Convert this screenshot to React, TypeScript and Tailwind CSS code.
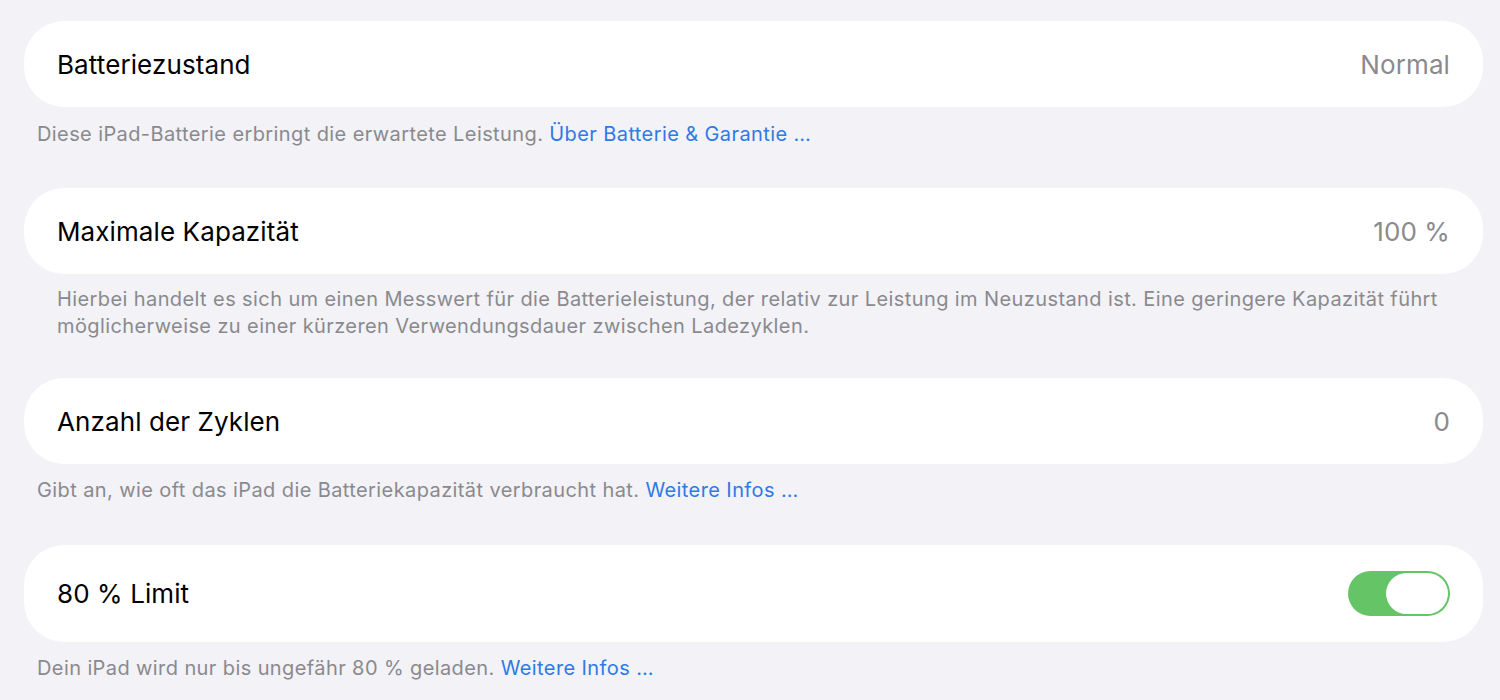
import React from "react";

const font = { fontFamily: 'Inter, "Noto Sans", sans-serif' };

function Row({ label, value, tall, children }: { label: string; value?: string; tall?: boolean; children?: React.ReactNode }) {
  return (
    <div className={`flex items-center justify-between bg-white rounded-[40px] pl-[33px] pr-[33px] ${tall ? "h-[97px]" : "h-[86px]"}`}>
      <span className="text-[26px] text-black tracking-[0.1px]">{label}</span>
      {value !== undefined && <span className="text-[26px] text-[#8a8a8e] tracking-[0.1px]">{value}</span>}
      {children}
    </div>
  );
}

function Toggle() {
  return (
    <div className="w-[102px] h-[45px] rounded-full bg-[#65c466] flex items-center justify-end pr-[2px]">
      <div className="w-[62px] h-[41px] rounded-full bg-white"></div>
    </div>
  );
}

const foot = "text-[20px] leading-[27px] text-[#8a8a8e] tracking-[0.4px]";

export default function App() {
  return (
    <div className="w-[1500px] h-[700px] bg-[#f2f2f7] pt-[21px] pl-[24px] pr-[17px] overflow-hidden" style={font}>
      <Row label="Batteriezustand" value="Normal" />
      <p className={`mt-[14px] ml-[13px] ${foot}`}>
        Diese iPad-Batterie erbringt die erwartete Leistung. <span className="text-[#2f7ae5]">Über Batterie &amp; Garantie …</span>
      </p>
      <div className="mt-[40px]">
        <Row label="Maximale Kapazität" value="100 %" />
      </div>
      <p className={`mt-[12px] ml-[33px] pr-[20px] ${foot}`}>
        Hierbei handelt es sich um einen Messwert für die Batterieleistung, der relativ zur Leistung im Neuzustand ist. Eine geringere Kapazität führt möglicherweise zu einer kürzeren Verwendungsdauer zwischen Ladezyklen.
      </p>
      <div className="mt-[38px]">
        <Row label="Anzahl der Zyklen" value="0" />
      </div>
      <p className={`mt-[13px] ml-[13px] ${foot}`}>
        Gibt an, wie oft das iPad die Batteriekapazität verbraucht hat. <span className="text-[#2f7ae5]">Weitere Infos …</span>
      </p>
      <div className="mt-[41px]">
        <Row label="80 % Limit" tall>
          <Toggle />
        </Row>
      </div>
      <p className={`mt-[13px] ml-[13px] ${foot}`}>
        Dein iPad wird nur bis ungefähr 80 % geladen. <span className="text-[#2f7ae5]">Weitere Infos …</span>
      </p>
    </div>
  );
}
